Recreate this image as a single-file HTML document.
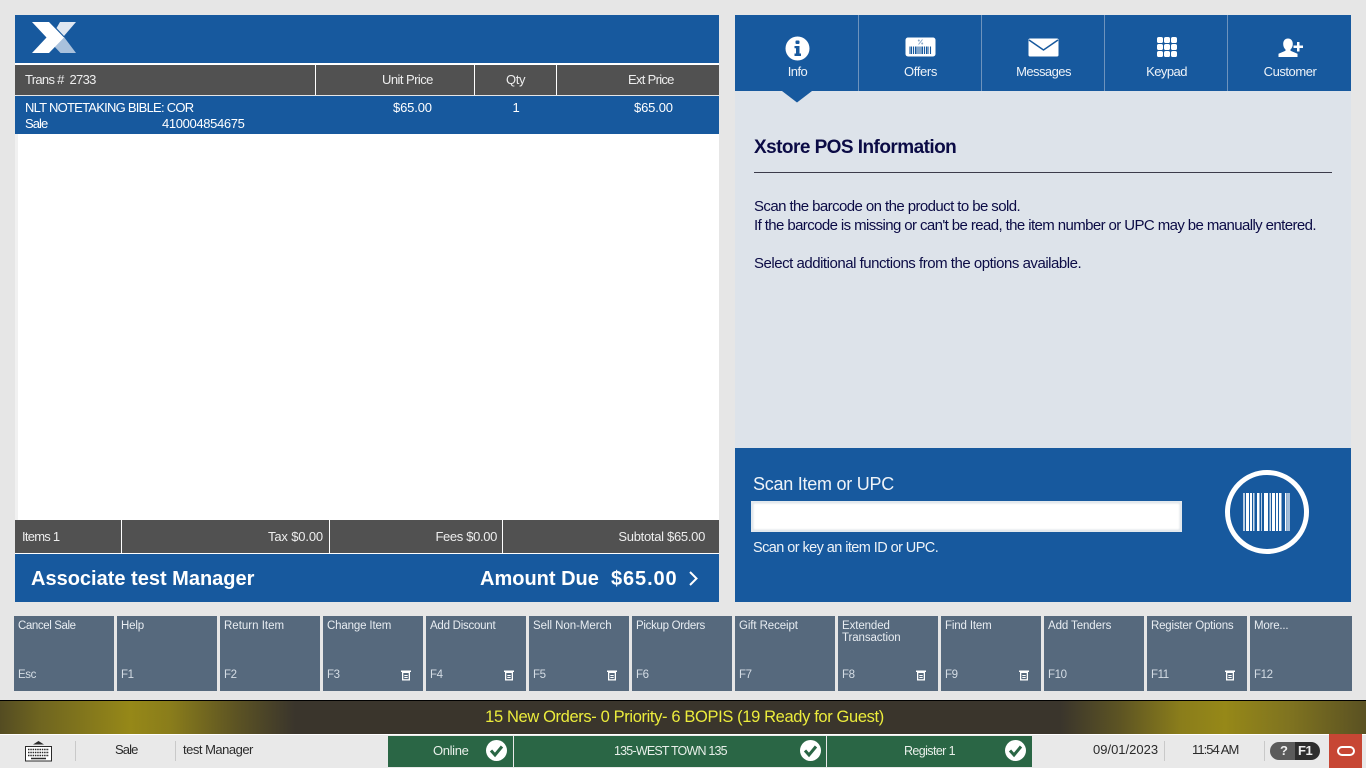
<!DOCTYPE html>
<html><head><meta charset="utf-8"><title>Xstore POS</title>
<style>
html,body{margin:0;padding:0}
body{width:1366px;height:768px;position:relative;overflow:hidden;background:#e6e6e6;font-family:"Liberation Sans",sans-serif;color:#fff}
div,span{box-sizing:border-box}
.a{position:absolute}
.t{position:absolute;white-space:nowrap;line-height:18px;font-size:13px;letter-spacing:-.35px}
.r{text-align:right}
.c{text-align:center}
.blue{background:#17599e}
.dark{background:#515151}
.fn{position:absolute;top:616px;height:75px;background:#56697d;color:#e8edf2}
.fn b{position:absolute;left:4px;top:4px;font-weight:400;font-size:11.5px;line-height:12px;white-space:nowrap;letter-spacing:-.15px}
.fn i{position:absolute;left:4px;top:53px;font-style:normal;font-size:11.5px;line-height:12px;color:#d5dde5;letter-spacing:-.4px}
.fn svg{position:absolute;left:78px;top:54px}
.tab{position:absolute;top:15px;height:76px;width:124px;border-right:1px solid #6d93bd}
.tab span{position:absolute;left:2px;right:0;top:48px;text-align:center;font-size:13px;line-height:17px;letter-spacing:-.55px;color:#edf2f8}
.tab svg{position:absolute}
.body{color:#0b0b45;font-size:15px;letter-spacing:-.58px;line-height:19px}
.g{position:absolute;top:736px;height:31px;background:#2a6645;color:#e8efe9;font-size:13px;line-height:30px;text-align:center;letter-spacing:-.35px}
.s{position:absolute;top:741px;width:1px;height:20px;background:#c9c9c9}
.st{position:absolute;top:741px;color:#2b2b2b;font-size:13px;line-height:18px;white-space:nowrap;letter-spacing:-.3px}
</style></head><body>

<!-- left panel -->
<div class="a blue" style="left:15px;top:15px;width:704px;height:48px"></div>
<svg class="a" style="left:32px;top:22px" width="44" height="32" viewBox="0 0 44 32">
<path d="M28 0H44L32 14 24.500 6Z" fill="#dfe7f1"/>
<path d="M32 15L44 31H28.500L21 23Z" fill="#a9c1dc"/>
<path d="M0 0H17L32 15.500 17 31H0L14.500 15.500Z" fill="#fff"/>
</svg>
<div class="a" style="left:15px;top:63px;width:704px;height:2px;background:#fff"></div>
<div class="a dark" style="left:15px;top:65px;width:704px;height:30px"></div>
<div class="a" style="left:315px;top:65px;width:1px;height:30px;background:#fff"></div>
<div class="a" style="left:474px;top:65px;width:1px;height:30px;background:#fff"></div>
<div class="a" style="left:556px;top:65px;width:1px;height:30px;background:#fff"></div>
<div class="t" style="left:25px;top:71px;color:#eee;letter-spacing:-.7px">Trans #&nbsp; 2733</div>
<div class="t" style="left:382px;top:71px;color:#eee;letter-spacing:-.55px">Unit Price</div>
<div class="t" style="left:506px;top:71px;color:#eee">Qty</div>
<div class="t" style="left:628px;top:71px;color:#eee;letter-spacing:-.7px">Ext Price</div>

<div class="a blue" style="left:15px;top:96px;width:704px;height:38px"></div>
<div class="t" style="left:25px;top:99px;letter-spacing:-.75px">NLT NOTETAKING BIBLE: COR</div>
<div class="t" style="left:25px;top:115px;letter-spacing:-.95px">Sale</div>
<div class="t" style="left:162px;top:115px">410004854675</div>
<div class="t" style="left:393px;top:99px;letter-spacing:-.15px">$65.00</div>
<div class="t" style="left:512.500px;top:99px">1</div>
<div class="t" style="left:634px;top:99px;letter-spacing:-.15px">$65.00</div>

<div class="a" style="left:15px;top:134px;width:704px;height:386px;background:#fff;border-left:3px solid #f1f1f1"></div>

<div class="a dark" style="left:15px;top:520px;width:704px;height:33px"></div>
<div class="a" style="left:121px;top:520px;width:1px;height:33px;background:#fff"></div>
<div class="a" style="left:329px;top:520px;width:1px;height:33px;background:#fff"></div>
<div class="a" style="left:502px;top:520px;width:1px;height:33px;background:#fff"></div>
<div class="a" style="left:15px;top:553px;width:704px;height:1px;background:#fff"></div>
<div class="t" style="left:22px;top:528px;color:#eee;letter-spacing:-.75px">Items 1</div>
<div class="t r" style="right:1043px;top:528px;color:#eee;letter-spacing:-.15px">Tax $0.00</div>
<div class="t r" style="right:869px;top:528px;color:#eee">Fees $0.00</div>
<div class="t r" style="right:661px;top:528px;color:#eee;letter-spacing:-.3px">Subtotal $65.00</div>

<div class="a blue" style="left:15px;top:554px;width:704px;height:48px"></div>
<div class="t" style="left:31px;top:567px;font-size:20px;line-height:24px;font-weight:700;letter-spacing:0">Associate test Manager</div>
<div class="t" style="left:480px;top:567px;font-size:20px;line-height:24px;font-weight:700;letter-spacing:0">Amount Due</div>
<div class="t" style="left:611px;top:567px;font-size:20px;line-height:24px;font-weight:700;letter-spacing:.9px">$65.00</div>
<svg class="a" style="left:688px;top:571px" width="12" height="15" viewBox="0 0 12 15"><path d="M2 1L8.500 7.500 2 14" fill="none" stroke="#fff" stroke-width="2"/></svg>

<!-- right panel -->
<div class="a" style="left:735px;top:15px;width:616px;height:433px;background:#dde3ea"></div>
<div class="a blue" style="left:735px;top:15px;width:616px;height:76px"></div>
<svg class="a" style="left:782px;top:91px" width="30" height="12" viewBox="0 0 30 12"><path d="M0 0H30L15 11.500Z" fill="#17599e"/></svg>

<div class="tab" style="left:735px">
<svg style="left:49.500px;top:20.500px" width="25" height="25" viewBox="0 0 25 25"><circle cx="12.500" cy="12.500" r="12" fill="#fff"/><rect x="10.500" y="4.500" width="4" height="3.500" rx="1" fill="#17599e"/><path d="M9.500 10H14.500V17.500H16V20H9.500V17.500H11V12.300H9.500Z" fill="#17599e"/></svg>
<span>Info</span></div>
<div class="tab" style="left:858px">
<svg style="left:47px;top:22px" width="31" height="20" viewBox="0 0 31 20"><rect x="0.500" y="0.500" width="30" height="19" rx="2.500" fill="#fff"/><path d="M5 9.500V17M6.500 9.500V17M8.500 9.500V17M10.500 9.500V17M12 9.500V17M14 9.500V17M16 9.500V17M17.500 9.500V17M19.500 9.500V17M21.500 9.500V17M23 9.500V17M25.500 9.500V17" stroke="#17599e" stroke-width="1.100"/><path d="M13.500 7.500L17.500 2.500" stroke="#8aa8c9" stroke-width="1"/><circle cx="13.800" cy="3.500" r="1" fill="#8aa8c9"/><circle cx="17.200" cy="6.500" r="1" fill="#8aa8c9"/></svg>
<span style="letter-spacing:-.35px">Offers</span></div>
<div class="tab" style="left:981px">
<svg style="left:47px;top:23px" width="31" height="19" viewBox="0 0 31 19"><rect x="0.500" y="0.500" width="30" height="18" rx="1.500" fill="#fff"/><path d="M1 2L15.500 12 30 2" fill="none" stroke="#17599e" stroke-width="1.500"/></svg>
<span>Messages</span></div>
<div class="tab" style="left:1104px">
<svg style="left:53px;top:22px" width="20" height="20" viewBox="0 0 20 20" fill="#fff"><rect x="0" y="0" width="6" height="6" rx="1.800"/><rect x="7" y="0" width="6" height="6" rx="1.800"/><rect x="14" y="0" width="6" height="6" rx="1.800"/><rect x="0" y="7" width="6" height="6" rx="1.800"/><rect x="7" y="7" width="6" height="6" rx="1.800"/><rect x="14" y="7" width="6" height="6" rx="1.800"/><rect x="0" y="14" width="6" height="6" rx="1.800"/><rect x="7" y="14" width="6" height="6" rx="1.800"/><rect x="14" y="14" width="6" height="6" rx="1.800"/></svg>
<span>Keypad</span></div>
<div class="tab" style="left:1227px;border-right:0;width:124px">
<svg style="left:51px;top:23px" width="26" height="20" viewBox="0 0 26 20" fill="#fff"><path d="M10 0.500C13 0.500 14.800 2.800 14.800 6 14.800 8.500 13.800 10.300 12.500 11.500V12.800L19.500 15.800V19H0.500V15.800L7.500 12.800V11.500C6.200 10.300 5.200 8.500 5.200 6 5.200 2.800 7 .5 10 .5Z"/><path d="M19 4H21.500V7.500H25V10H21.500V13.500H19V10H15.500V7.500H19Z"/></svg>
<span style="letter-spacing:-.45px">Customer</span></div>

<div class="t" style="left:754px;top:136px;font-size:19px;line-height:24px;font-weight:700;color:#0b0b45;letter-spacing:-.55px">Xstore POS Information</div>
<div class="a" style="left:754px;top:172px;width:578px;height:1px;background:#3b3b4a"></div>
<div class="t body" style="left:754px;top:197px">Scan the barcode on the product to be sold.</div>
<div class="t body" style="left:754px;top:216px;letter-spacing:-.6px">If the barcode is missing or can't be read, the item number or UPC may be manually entered.</div>
<div class="t body" style="left:754px;top:254px;letter-spacing:-.48px">Select additional functions from the options available.</div>

<div class="a blue" style="left:735px;top:448px;width:616px;height:154px"></div>
<div class="t" style="left:753px;top:472px;font-size:18px;line-height:24px;letter-spacing:-.25px;color:#eef3f8">Scan Item or UPC</div>
<div class="a" style="left:751px;top:501px;width:431px;height:31px;background:#fff;border:2px solid #e3e9ee;box-shadow:inset 0 0 2px #cfd6dc"></div>
<div class="t" style="left:753px;top:539px;font-size:14.500px;letter-spacing:-.57px;color:#eef3f8">Scan or key an item ID or UPC.</div>
<svg class="a" style="left:1225px;top:470px" width="84" height="84" viewBox="0 0 84 84">
<circle cx="42" cy="42" r="39.500" fill="none" stroke="#fff" stroke-width="5"/>
<g fill="#fff"><rect x="18" y="23" width="2" height="38" opacity=".7"/><rect x="21" y="23" width="3" height="38"/><rect x="25" y="23" width="2" height="38"/><rect x="28" y="23" width="1.500" height="38" opacity=".8"/><rect x="32" y="23" width="2.500" height="38"/><rect x="36" y="23" width="1" height="38" opacity=".7"/><rect x="39" y="23" width="4" height="38"/><rect x="44.500" y="23" width="1.500" height="38" opacity=".8"/><rect x="47" y="23" width="3" height="38"/><rect x="51" y="23" width="2" height="38"/><rect x="54" y="23" width="2.500" height="38"/><rect x="60" y="23" width="1.500" height="38"/><rect x="62" y="23" width="3" height="38" opacity=".6"/></g></svg>

<!-- function keys -->
<div class="fn" style="left:14px;width:100px"><b style="letter-spacing:-.4px">Cancel Sale</b><i>Esc</i></div>
<div class="fn" style="left:117px;width:100px"><b>Help</b><i>F1</i></div>
<div class="fn" style="left:220px;width:100px"><b style="letter-spacing:0">Return Item</b><i>F2</i></div>
<div class="fn" style="left:323px;width:100px"><b>Change Item</b><i>F3</i><svg width="10" height="11" viewBox="0 0 10 11"><path d="M0 .5H10V2H9V10.500H1V2H0Z" fill="#fff"/><rect x="2.300" y="3" width="5.400" height="6.200" fill="#56697d"/><rect x="3.300" y="5" width="3.400" height="1" fill="#fff"/><rect x="3.300" y="7" width="3.400" height="1" fill="#fff"/></svg></div>
<div class="fn" style="left:426px;width:100px"><b style="letter-spacing:-.25px">Add Discount</b><i>F4</i><svg width="10" height="11" viewBox="0 0 10 11"><path d="M0 .5H10V2H9V10.500H1V2H0Z" fill="#fff"/><rect x="2.300" y="3" width="5.400" height="6.200" fill="#56697d"/><rect x="3.300" y="5" width="3.400" height="1" fill="#fff"/><rect x="3.300" y="7" width="3.400" height="1" fill="#fff"/></svg></div>
<div class="fn" style="left:529px;width:100px"><b style="letter-spacing:-.05px">Sell Non-Merch</b><i>F5</i><svg width="10" height="11" viewBox="0 0 10 11"><path d="M0 .5H10V2H9V10.500H1V2H0Z" fill="#fff"/><rect x="2.300" y="3" width="5.400" height="6.200" fill="#56697d"/><rect x="3.300" y="5" width="3.400" height="1" fill="#fff"/><rect x="3.300" y="7" width="3.400" height="1" fill="#fff"/></svg></div>
<div class="fn" style="left:632px;width:100px"><b style="letter-spacing:-.3px">Pickup Orders</b><i>F6</i></div>
<div class="fn" style="left:735px;width:100px"><b style="letter-spacing:-.1px">Gift Receipt</b><i>F7</i></div>
<div class="fn" style="left:838px;width:100px"><b style="letter-spacing:-.1px">Extended<br>Transaction</b><i>F8</i><svg width="10" height="11" viewBox="0 0 10 11"><path d="M0 .5H10V2H9V10.500H1V2H0Z" fill="#fff"/><rect x="2.300" y="3" width="5.400" height="6.200" fill="#56697d"/><rect x="3.300" y="5" width="3.400" height="1" fill="#fff"/><rect x="3.300" y="7" width="3.400" height="1" fill="#fff"/></svg></div>
<div class="fn" style="left:941px;width:100px"><b>Find Item</b><i>F9</i><svg width="10" height="11" viewBox="0 0 10 11"><path d="M0 .5H10V2H9V10.500H1V2H0Z" fill="#fff"/><rect x="2.300" y="3" width="5.400" height="6.200" fill="#56697d"/><rect x="3.300" y="5" width="3.400" height="1" fill="#fff"/><rect x="3.300" y="7" width="3.400" height="1" fill="#fff"/></svg></div>
<div class="fn" style="left:1044px;width:100px"><b style="letter-spacing:-.1px">Add Tenders</b><i>F10</i></div>
<div class="fn" style="left:1147px;width:100px"><b style="letter-spacing:-.2px">Register Options</b><i>F11</i><svg width="10" height="11" viewBox="0 0 10 11"><path d="M0 .5H10V2H9V10.500H1V2H0Z" fill="#fff"/><rect x="2.300" y="3" width="5.400" height="6.200" fill="#56697d"/><rect x="3.300" y="5" width="3.400" height="1" fill="#fff"/><rect x="3.300" y="7" width="3.400" height="1" fill="#fff"/></svg></div>
<div class="fn" style="left:1250px;width:102px"><b style="letter-spacing:-.2px">More...</b><i>F12</i></div>

<!-- notification banner -->
<div class="a" style="left:0;top:700px;width:1366px;height:1px;background:#000"></div>
<div class="a" style="left:0;top:701px;width:1366px;height:33px;background:linear-gradient(90deg,#544c22 0,#6f6520 40px,#968818 130px,#8a7d1b 170px,#5d5423 235px,#3a352c 295px,#3a352c 1060px,#5d5423 1120px,#8a7d1b 1180px,#968818 1225px,#7f7320 1290px,#5a5122 1366px)"></div>
<div class="t c" style="left:0;width:1369px;top:706px;font-size:16.500px;line-height:22px;color:#ecec3c;letter-spacing:-.37px">15 New Orders- 0 Priority- 6 BOPIS (19 Ready for Guest)</div>
<div class="a" style="left:0;top:734px;width:1366px;height:1px;background:#fff"></div>

<!-- status bar -->
<div class="a" style="left:0;top:735px;width:1366px;height:33px;background:#e9e9e9"></div>
<svg class="a" style="left:24px;top:740px" width="29" height="22" viewBox="0 0 29 22"><path d="M9 4.500L14.500 1 20 4.500Z" fill="#2b2b2b"/><rect x="1.500" y="6.500" width="26" height="14.500" fill="#fff" stroke="#2b2b2b"/><path d="M4 9.500H25M4 12.500H25M4 15.500H25" stroke="#2b2b2b" stroke-width="1.500" stroke-dasharray="1.500 .8"/><path d="M7 18.500H22" stroke="#2b2b2b" stroke-width="1.500"/></svg>
<div class="s" style="left:75px"></div>
<div class="st" style="left:115px;letter-spacing:-.9px">Sale</div>
<div class="s" style="left:175px"></div>
<div class="st" style="left:183px;letter-spacing:-.5px">test Manager</div>

<div class="g" style="left:388px;width:125px;padding-right:0"><span class="a" style="left:45px;top:0">Online</span></div>
<div class="g" style="left:514px;width:312px;font-size:12.500px;letter-spacing:-.8px"><span class="a" style="left:100px;top:0;white-space:nowrap">135-WEST TOWN 135</span></div>
<div class="g" style="left:827px;width:205px;font-size:12.500px;letter-spacing:-.6px"><span class="a" style="left:77px;top:0;white-space:nowrap">Register 1</span></div>
<svg class="a" style="left:486px;top:740px" width="21" height="21" viewBox="0 0 21 21"><circle cx="10.500" cy="10.500" r="10.500" fill="#fff"/><path d="M5 10.500L9 15 16 6.500" fill="none" stroke="#2a6645" stroke-width="3"/></svg>
<svg class="a" style="left:800px;top:740px" width="21" height="21" viewBox="0 0 21 21"><circle cx="10.500" cy="10.500" r="10.500" fill="#fff"/><path d="M5 10.500L9 15 16 6.500" fill="none" stroke="#2a6645" stroke-width="3"/></svg>
<svg class="a" style="left:1005px;top:740px" width="21" height="21" viewBox="0 0 21 21"><circle cx="10.500" cy="10.500" r="10.500" fill="#fff"/><path d="M5 10.500L9 15 16 6.500" fill="none" stroke="#2a6645" stroke-width="3"/></svg>

<div class="st" style="left:1093px;letter-spacing:0">09/01/2023</div>
<div class="s" style="left:1164px"></div>
<div class="st" style="left:1192px;letter-spacing:-.95px">11:54 AM</div>
<div class="s" style="left:1264px"></div>
<div class="a" style="left:1270px;top:742px;width:50px;height:18px;border-radius:9px;background:linear-gradient(90deg,#5b5b5b 0,#5b5b5b 50%,#2e2e2e 50%,#2e2e2e 100%);font-size:13px;font-weight:700;line-height:18px;color:#eee"><span class="a" style="left:10px;top:0">?</span><span class="a" style="left:28px;top:0;letter-spacing:-.5px">F1</span></div>
<div class="a" style="left:1329px;top:734px;width:33px;height:34px;background:#c74634"></div>
<div class="a" style="left:1337px;top:746px;width:18px;height:10px;border:2px solid #fff;border-radius:5px"></div>
</body></html>
